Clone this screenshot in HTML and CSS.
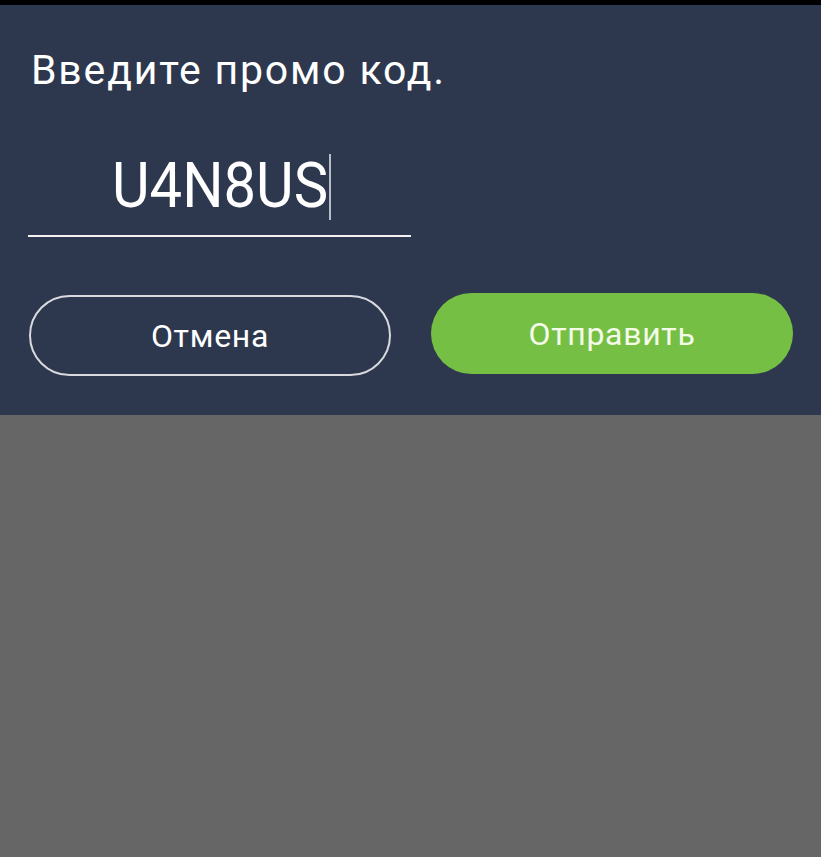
FILE: index.html
```html
<!DOCTYPE html>
<html lang="ru">
<head>
    <meta charset="UTF-8">
    <meta name="viewport" content="width=device-width, initial-scale=1.0">
    <title>Промо код</title>
    <link rel="stylesheet" href="styles.css">
</head>
<body>
    <div class="status-bar"></div>

    <div class="dialog">
        <h1 class="dialog-title">Введите промо код.</h1>

        <div class="code-field">
            <span class="code-value">U4N8US</span><span class="cursor"></span>
        </div>

        <div class="dialog-buttons">
            <button class="button button-outline">Отмена</button>
            <button class="button button-green">Отправить</button>
        </div>
    </div>

    <div class="backdrop"></div>
</body>
</html>
```

FILE: styles.css
```css
body {
    margin: 0;
    height: 857px;
    overflow: hidden;
    display: flex;
    flex-direction: column;
    background: #666666;
    font-family: Roboto, "Noto Sans", sans-serif;
    color: #fff;
}

.status-bar {
    height: 5px;
    background: #000;
}

.dialog {
    background: #2d374d;
    padding: 0 28px;
    height: 410px;
    box-sizing: border-box;
}

.dialog-title {
    margin: 0;
    padding: 40px 0 0 3px;
    font-size: 41px;
    font-weight: 400;
    line-height: 50px;
    letter-spacing: 1.8px;
}

.code-field {
    width: 383px;
    height: 102px;
    border-bottom: 2px solid #f2f2f2;
    box-sizing: border-box;
    display: flex;
    align-items: flex-end;
    padding: 0 0 16px 84px;
    margin-top: 40px;
}

.code-value {
    display: inline-block;
    font-size: 63px;
    line-height: 66px;
    transform: scaleX(0.92);
    transform-origin: left;
}

.cursor {
    width: 2px;
    height: 66px;
    margin: 0 0 -1px -18px;
    background: #b8bcc6;
}

.dialog-buttons {
    display: flex;
    gap: 40px;
    margin-top: 56px;
}

.button {
    width: 362px;
    height: 81px;
    border-radius: 41px;
    font-family: Roboto, "Noto Sans", sans-serif;
    font-size: 32px;
    letter-spacing: 0.7px;
    color: #fff;
    cursor: pointer;
    padding: 0;
}

.button-outline {
    margin: 2px 0 0 1px;
    background: transparent;
    border: 2px solid #d8dadf;
}

.button-green {
    background: #76bf45;
    border: none;
    color: #f4fbe8;
}

.backdrop {
    flex: 1;
    background: #666666;
}
```
